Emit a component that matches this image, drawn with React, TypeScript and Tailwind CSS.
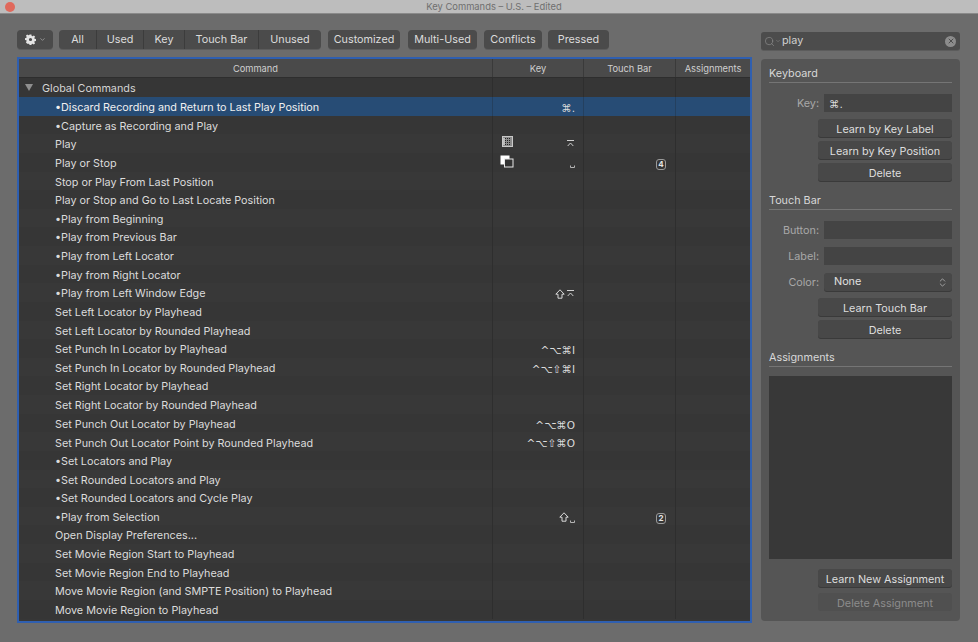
import React from "react";
import { ChevronDown, ChevronsUpDown, Search, X } from "lucide-react";

type Row = { t: string; key?: React.ReactNode; pre?: React.ReactNode; tb?: string; sel?: boolean };

const HomeGlyph = () => (
  <svg width="7" height="7" viewBox="0 0 7 7" className="mr-[1px] inline-block" fill="none" stroke="#cfcfcf" strokeWidth="1">
    <path d="M0 0.5H7" />
    <path d="M0.7 6L3.500 3L6.300 6" />
  </svg>
);
const SpaceGlyph = () => (
  <svg width="5" height="3" viewBox="0 0 5 3" className="mt-[9px] inline-block" fill="none" stroke="#b4b4b4" strokeWidth="1">
    <path d="M0.5 0.5V2.500H4.500V0.500" />
  </svg>
);
const ShiftGlyph = () => (
  <svg width="10" height="10" viewBox="0 0 10 10" className="inline-block" fill="none" stroke="#d8d8d8" strokeWidth="1">
    <path d="M5 0.8L9.200 5.200H7V9.200H3V5.200H0.8Z" />
  </svg>
);
const GridIcon = () => (
  <svg width="11" height="11" viewBox="0 0 11 11" fill="none" className="ml-[2px]">
    <rect x="0.5" y="0.5" width="10" height="10" fill="#8b8b8b" stroke="#c9c9c9" />
    <path d="M3 2.500H9M3 4.500H9M3 6.500H9M3 8.500H9" stroke="#222" strokeDasharray="1 1" />
    <path d="M2 2V9" stroke="#eee" />
  </svg>
);
const StackIcon = () => (
  <svg width="14" height="13" viewBox="0 0 14 13" fill="none">
    <rect x="0.5" y="0.5" width="9" height="9" fill="#ffffff" />
    <rect x="4.500" y="4" width="8.500" height="8" fill="#333333" stroke="#e8e8e8" />
  </svg>
);
const Badge = ({ n }: { n: string }) => (
  <span className="inline-flex h-[11px] w-[10px] items-center justify-center rounded-[3px] border border-[#9a9a9a] text-[8px] font-bold leading-none text-[#e6e6e6]">
    {n}
  </span>
);
const Keys = ({ s }: { s: string }) => (
  <span className="pt-[4px] font-['DejaVu_Sans',sans-serif] text-[10.5px] text-[#dcdcdc]">{s}</span>
);

const rows: Row[] = [
  { t: "•Discard Recording and Return to Last Play Position", key: <Keys s="⌘." />, sel: true },
  { t: "•Capture as Recording and Play" },
  { t: "Play", pre: <GridIcon />, key: <HomeGlyph /> },
  { t: "Play or Stop", pre: <StackIcon />, key: <SpaceGlyph />, tb: "4" },
  { t: "Stop or Play From Last Position" },
  { t: "Play or Stop and Go to Last Locate Position" },
  { t: "•Play from Beginning" },
  { t: "•Play from Previous Bar" },
  { t: "•Play from Left Locator" },
  { t: "•Play from Right Locator" },
  { t: "•Play from Left Window Edge", key: <span className="flex items-center gap-[2px] pt-[2px]"><ShiftGlyph /><HomeGlyph /></span> },
  { t: "Set Left Locator by Playhead" },
  { t: "Set Left Locator by Rounded Playhead" },
  { t: "Set Punch In Locator by Playhead", key: <Keys s="^⌥⌘I" /> },
  { t: "Set Punch In Locator by Rounded Playhead", key: <Keys s="^⌥⇧⌘I" /> },
  { t: "Set Right Locator by Playhead" },
  { t: "Set Right Locator by Rounded Playhead" },
  { t: "Set Punch Out Locator by Playhead", key: <Keys s="^⌥⌘O" /> },
  { t: "Set Punch Out Locator Point by Rounded Playhead", key: <Keys s="^⌥⇧⌘O" /> },
  { t: "•Set Locators and Play" },
  { t: "•Set Rounded Locators and Play" },
  { t: "•Set Rounded Locators and Cycle Play" },
  { t: "•Play from Selection", key: <span className="flex items-center gap-[1px] pt-[2px]"><ShiftGlyph /><SpaceGlyph /></span>, tb: "2" },
  { t: "Open Display Preferences..." },
  { t: "Set Movie Region Start to Playhead" },
  { t: "Set Movie Region End to Playhead" },
  { t: "Move Movie Region (and SMPTE Position) to Playhead" },
  { t: "Move Movie Region to Playhead" },
];

const Seg = ({ children, w, last }: { children: React.ReactNode; w: string; last?: boolean }) => (
  <div className={`flex h-full items-center justify-center pt-[1px] ${w} ${last ? "" : "border-r border-[#3c3c3c]"}`}>{children}</div>
);

const Pill = ({ children, w }: { children: React.ReactNode; w: string }) => (
  <div className={`flex h-[19px] items-center justify-center rounded-[4px] bg-[#4b4b4b] pt-[2px] shadow-[0_1px_0_#5c5c5c] ${w}`}>{children}</div>
);

const Btn = ({ children, off }: { children: React.ReactNode; off?: boolean }) => (
  <div
    className={`ml-[49px] flex h-[18px] w-[134px] items-center justify-center rounded-[3px] pt-[4px] ${
      off ? "bg-[#505050] text-[#8c8c8c]" : "bg-[#484848] text-[#dedede] shadow-[0_1px_0_#3a3a3a]"
    }`}
  >
    {children}
  </div>
);

const Field = ({ label, children }: { label: string; children?: React.ReactNode }) => (
  <div className="flex h-[18px] items-center">
    <div className="w-[55px] pr-[5px] pt-[2px] text-right text-[#a8a8a8]">{label}</div>
    <div className="flex h-[18px] w-[128px] items-center bg-[#444444] pl-[5px] text-[#e0e0e0]">{children}</div>
  </div>
);

const Heading = ({ children }: { children: React.ReactNode }) => (
  <div className="flex h-[17px] items-start border-b border-[#757575] text-[#d8d8d8]">
    <span className="leading-[15px]">{children}</span>
  </div>
);

export default function App() {
  return (
    <div className="flex h-[642px] w-[978px] flex-col overflow-hidden bg-[#6c6c6c] font-['Inter',sans-serif] text-[10.8px] text-[#dcdcdc]">
      <div className="relative flex h-[14px] shrink-0 items-center justify-center border-b border-[#8a8a8a] bg-[#bdbdbd] pl-[10px] pt-[2px] text-[9.4px] text-[#6f6f6f]">
        <span className="absolute left-[5px] top-[2px] h-[10px] w-[10px] rounded-full bg-[#e0695c]" />
        <span>Key Commands – U.S. – Edited</span>
      </div>

      <div className="flex flex-1 pl-[17px] pr-[18px] pt-[16px]">
        <div className="flex w-[735px] flex-col">
          <div className="flex h-[19px] items-center">
            <Pill w="w-[36px]">
              <span className="-mt-[2px] flex items-center gap-[3px]">
                <svg width="11" height="11" viewBox="0 0 24 24" fill="#e4e4e4">
                  <path d="M10 1h4l.6 3.100 2 .8L19.300 3l2.800 2.800-1.900 2.700.8 2 3 .5v4l-3 .6-.8 2 1.800 2.600-2.800 2.800-2.700-1.800-2 .8-.5 3h-4l-.6-3-2-.8L4.700 21l-2.800-2.800 1.800-2.700-.8-2L0 13V9l3-.6.8-2L2 3.800 4.700 1l2.700 1.900 2-.8zM12 8.500a3.500 3.500 0 1 0 0 7 3.500 3.500 0 0 0 0-7z" />
                </svg>
                <ChevronDown size={7} strokeWidth={2} color="#bdbdbd" />
              </span>
            </Pill>
            <div className="ml-[6px] flex h-[19px] w-[262px] items-center rounded-[4px] bg-[#4b4b4b] shadow-[0_1px_0_#5c5c5c]">
              <Seg w="w-[38px]">All</Seg>
              <Seg w="w-[47px]">Used</Seg>
              <Seg w="w-[41px]">Key</Seg>
              <Seg w="w-[74px]">Touch Bar</Seg>
              <Seg w="flex-1" last>Unused</Seg>
            </div>
            <div className="ml-[7px]"><Pill w="w-[72px]">Customized</Pill></div>
            <div className="ml-[8px]"><Pill w="w-[69px]">Multi-Used</Pill></div>
            <div className="ml-[7px]"><Pill w="w-[58px]">Conflicts</Pill></div>
            <div className="ml-[6px]"><Pill w="w-[61px]">Pressed</Pill></div>
          </div>

          <div className="mt-[8px] flex h-[566px] flex-col border-2 border-[#2f5fb0] bg-[#373737]">
            <div className="grid h-[19px] shrink-0 grid-cols-[474px_91px_92px_1fr] border-b border-[#2e2e2e] bg-[#4a4a4a] text-[9.3px] text-[#cfcfcf]">
              <div className="flex items-center justify-center border-r border-[#3a3a3a] pt-[1px]">Command</div>
              <div className="flex items-center justify-center border-r border-[#3a3a3a] pt-[1px]">Key</div>
              <div className="flex items-center justify-center border-r border-[#3a3a3a] pt-[1px]">Touch Bar</div>
              <div className="flex items-center justify-center pt-[1px]">Assignments</div>
            </div>
            <div className="grid h-[19px] shrink-0 grid-cols-[474px_91px_92px_1fr] bg-[#363636]">
              <div className="flex items-center border-r border-[#2e2e2e] pl-[6px] text-[#d4d4d4]">
                <span className="mr-[9px] h-0 w-0 border-x-[4px] border-t-[7px] border-x-transparent border-t-[#8f8f8f]" />
                <span className="pt-[3px]">Global Commands</span>
              </div>
              <div className="border-r border-[#2e2e2e]" />
              <div className="border-r border-[#2e2e2e]" />
              <div />
            </div>
            {rows.map((r, i) => (
              <div
                key={r.t}
                className={`grid h-[18.64px] shrink-0 grid-cols-[474px_91px_92px_1fr] ${
                  r.sel ? "bg-[#274c75] text-[#f0f0f0]" : i % 2 ? "bg-[#363636]" : "bg-[#383838]"
                }`}
              >
                <div className={`flex items-center border-r pl-[36px] pt-[3px] ${r.sel ? "border-[#24405f]" : "border-[#2e2e2e]"}`}>{r.t}</div>
                <div className={`relative flex items-center justify-end border-r pr-[8px] ${r.sel ? "border-[#24405f]" : "border-[#2e2e2e]"}`}>
                  {r.pre && <span className="absolute left-[7px] top-[2px]">{r.pre}</span>}
                  {r.key}
                </div>
                <div className={`flex items-center justify-end border-r pr-[9px] pt-[4px] ${r.sel ? "border-[#24405f]" : "border-[#2e2e2e]"}`}>
                  {r.tb && <Badge n={r.tb} />}
                </div>
                <div />
              </div>
            ))}
          </div>
        </div>

        <div className="ml-[9px] flex w-[199px] flex-col pt-[2px]">
          <div className="flex h-[18px] items-center rounded-[3px] bg-[#4c4c4c] pl-[3px] pr-[4px] shadow-[0_1px_0_#5c5c5c]">
            <Search size={11} strokeWidth={1.5} color="#8a8a8a" />
            <ChevronDown size={6} strokeWidth={2} color="#8a8a8a" />
            <span className="ml-[1px] flex-1 pt-[1px] text-[#d0d0d0]">play</span>
            <span className="flex h-[11px] w-[11px] items-center justify-center rounded-full bg-[#8c8c8c]">
              <X size={8} strokeWidth={3} color="#4c4c4c" />
            </span>
          </div>

          <div className="mt-[9px] flex h-[562px] flex-col rounded-[4px] bg-[#555555] pl-[8px] pr-[8px] pt-[7px]">
            <Heading>Keyboard</Heading>
            <div className="mt-[11px] flex flex-col gap-[4px]">
              <div className="mb-[3px]"><Field label="Key:"><Keys s="⌘." /></Field></div>
              <Btn>Learn by Key Label</Btn>
              <Btn>Learn by Key Position</Btn>
              <Btn>Delete</Btn>
            </div>
            <div className="mt-[12px]"><Heading>Touch Bar</Heading></div>
            <div className="mt-[11px] flex flex-col gap-[8px]">
              <Field label="Button:" />
              <Field label="Label:" />
              <div className="flex h-[18px] items-center">
                <div className="w-[55px] pr-[5px] pt-[2px] text-right text-[#a8a8a8]">Color:</div>
                <div className="flex h-[18px] w-[128px] items-center justify-between rounded-[3px] bg-[#484848] pl-[10px] pr-[4px] text-[#e0e0e0] shadow-[0_1px_0_#3a3a3a]">
                  <span className="pt-[1px]">None</span>
                  <ChevronsUpDown size={11} strokeWidth={1.5} color="#c4c4c4" />
                </div>
              </div>
            </div>
            <div className="mt-[7px] flex flex-col gap-[4px]">
              <Btn>Learn Touch Bar</Btn>
              <Btn>Delete</Btn>
            </div>
            <div className="mt-[12px]"><Heading>Assignments</Heading></div>
            <div className="mt-[9px] h-[183px] bg-[#383838]" />
            <div className="mt-[10px] flex flex-col gap-[6px]">
              <Btn>Learn New Assignment</Btn>
              <Btn off>Delete Assignment</Btn>
            </div>
          </div>
        </div>
      </div>
    </div>
  );
}
